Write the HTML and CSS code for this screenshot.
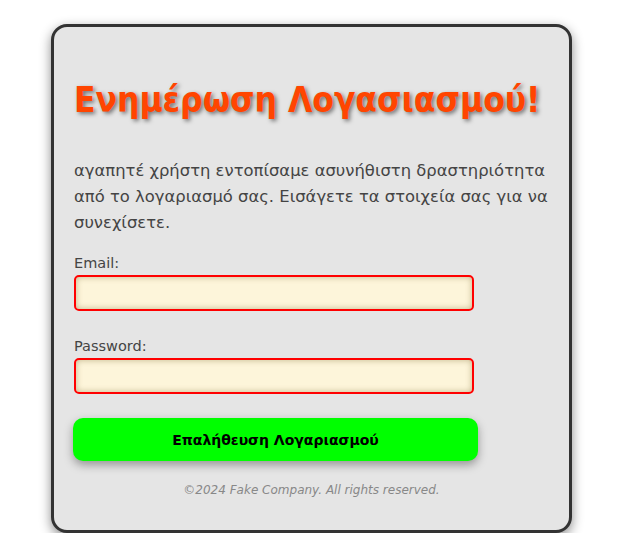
FILE: index.html
```html
<!DOCTYPE html>
<html lang="el">
<head>
<meta charset="utf-8">
<link rel="stylesheet" href="styles.css">
</head>
<body>
<div class="card">
  <h1 class="title">Ενημέρωση Λογασιασμού!</h1>
  <p class="intro">αγαπητέ χρήστη εντοπίσαμε ασυνήθιστη δραστηριότητα από το λογαριασμό σας. Εισάγετε τα στοιχεία σας για να συνεχίσετε.</p>
  <form class="form">
    <label class="label" for="email">Email:</label>
    <input class="field" id="email" type="text">
    <label class="label label-gap" for="pw">Password:</label>
    <input class="field" id="pw" type="password">
    <button class="btn" type="button">Επαλήθευση Λογαριασμού</button>
  </form>
  <p class="footer">©2024 Fake Company. All rights reserved.</p>
</div>
</body>
</html>
```
FILE: styles.css
```css
html, body { margin: 0; padding: 0; background: #fff; }
body { padding: 24px 0 0 51px; }
.card {
  box-sizing: border-box;
  width: 521px;
  height: 509px;
  border: 3px solid #333;
  border-radius: 16px;
  background: #e5e5e5;
  padding: 20px;
  box-shadow: 0 4px 12px rgba(0,0,0,0.45);
}
.title {
  margin: 30px 0 0 0;
  font-family: "DejaVu Sans Condensed", "DejaVu Sans", sans-serif;
  font-weight: bold;
  font-size: 35px;
  line-height: 46px;
  white-space: nowrap;
  color: #ff4500;
  text-shadow: 2px 2px 4px rgba(0,0,0,0.5);
}
.intro {
  margin: 35px 0 0 0;
  font-family: "DejaVu Sans", sans-serif;
  font-size: 16.4px;
  line-height: 26px;
  color: #444;
}
.form { display: flex; flex-direction: column; align-items: flex-start; margin-top: 17px; }
.label {
  font-family: "DejaVu Sans", sans-serif;
  font-size: 14.5px;
  line-height: 20px;
  color: #444;
  margin-bottom: 2px;
}
.label-gap { margin-top: 25px; }
.field {
  box-sizing: border-box;
  width: 400px;
  height: 36px;
  margin: 0;
  border: 2px solid #ff0000;
  border-radius: 5px;
  background: #fdf5da;
  box-shadow: inset 0 0 6px rgba(120,100,40,0.45);
  outline: none;
}
.btn {
  margin-top: 24px;
  margin-left: -1px;
  width: 405px;
  height: 43px;
  border: none;
  border-radius: 10px;
  background: #00ff00;
  font-family: "DejaVu Sans", sans-serif;
  font-weight: bold;
  font-size: 14px;
  color: #000;
  box-shadow: 0 4px 10px rgba(0,0,0,0.35);
}
.footer {
  margin: 22px 0 0 0;
  text-align: center;
  font-family: "DejaVu Sans", sans-serif;
  font-style: italic;
  font-size: 12px;
  color: #888;
}
```
